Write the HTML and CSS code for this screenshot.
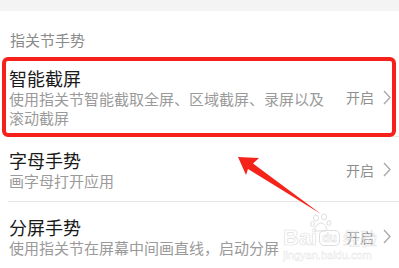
FILE: index.html
```html
<!DOCTYPE html>
<html lang="zh">
<head>
<meta charset="utf-8">
<link rel="stylesheet" href="styles.css">
</head>
<body>
<div class="page">
  <div class="band"></div>
  <div class="section-title">指关节手势</div>
  <div class="row row-first">
    <div class="text">
      <div class="title">智能截屏</div>
      <div class="desc">使用指关节智能截取全屏、区域截屏、录屏以及滚动截屏</div>
    </div>
    <div class="action">
      <span class="state">开启</span>
      <svg class="chev" width="8" height="15" viewBox="0 0 8 15"><polyline points="1,1 7,7.5 1,14" fill="none" stroke="#a8a8a8" stroke-width="1.3"/></svg>
    </div>
    <div class="highlight"></div>
  </div>
  <div class="row">
    <div class="text">
      <div class="title">字母手势</div>
      <div class="desc">画字母打开应用</div>
    </div>
    <div class="action">
      <span class="state">开启</span>
      <svg class="chev" width="8" height="15" viewBox="0 0 8 15"><polyline points="1,1 7,7.5 1,14" fill="none" stroke="#a8a8a8" stroke-width="1.3"/></svg>
    </div>
  </div>
  <div class="row row-last">
    <div class="text">
      <div class="title">分屏手势</div>
      <div class="desc">使用指关节在屏幕中间画直线，启动分屏</div>
    </div>
    <div class="action">
      <span class="state">开启</span>
      <svg class="chev" width="8" height="15" viewBox="0 0 8 15"><polyline points="1,1 7,7.5 1,14" fill="none" stroke="#a8a8a8" stroke-width="1.3"/></svg>
    </div>
  </div>
  <svg class="arrow" width="399" height="268" viewBox="0 0 399 268">
    <polygon points="238,157 259,158 253,163.5 321,214 248,169 246,175" fill="#f5241b"/>
  </svg>
  <div class="watermark">
    <svg class="paw" width="22" height="20" viewBox="0 0 22 20">
      <g fill="none" stroke="#d8d8d8" stroke-width="1">
        <ellipse cx="6" cy="5" rx="2.5" ry="3"/>
        <ellipse cx="14" cy="4" rx="2.5" ry="3"/>
        <ellipse cx="2.5" cy="11" rx="2" ry="2.5"/>
        <ellipse cx="19" cy="10" rx="2" ry="2.5"/>
        <path d="M5 18 C4 13 9 10 11 10 C14 10 18 14 16 18 Z"/>
      </g>
    </svg>
    <div class="wm-line">
      <span class="wm-bai">Bai</span><span class="wm-du">du</span><span class="wm-cn">经验</span>
    </div>
    <div class="wm-url">jingyan.baidu.com</div>
  </div>
</div>
</body>
</html>
```

FILE: styles.css
```css
* { box-sizing: border-box; }
html, body { margin: 0; padding: 0; background: #fff; }
body {
  font-family: "Noto Sans CJK SC", "Noto Sans", sans-serif;
}
.page {
  position: relative;
  width: 399px;
  height: 268px;
  overflow: hidden;
  background: #fff;
}
.band {
  height: 11px;
  background: #f4f4f4;
}
.section-title {
  height: 46px;
  padding: 19px 0 7px 10px;
  font-size: 15px;
  line-height: 20px;
  color: #8a8a8a;
}
.row {
  position: relative;
  display: flex;
  align-items: center;
  margin-left: 8px;
  padding: 12px 8px 11px 1px;
  border-bottom: 1px solid #e6e6e6;
}
.row-first {
  padding-top: 10px;
  padding-bottom: 9px;
}
.row-last {
  padding-top: 14px;
  border-bottom: none;
}
.text {
  flex: 1;
  min-width: 0;
  padding-right: 8px;
}
.title {
  font-size: 18px;
  line-height: 22px;
  color: #1a1a1a;
}
.desc {
  font-size: 15px;
  line-height: 19px;
  color: #9a9a9a;
}
.action {
  display: flex;
  align-items: center;
  gap: 9px;
  flex: none;
}
.state {
  font-size: 14px;
  line-height: 18px;
  color: #8f8f8f;
}
.chev { display: block; }
.highlight {
  position: absolute;
  left: -6px;
  top: 0;
  right: 3px;
  bottom: -1px;
  border: 4px solid #f5211a;
  border-radius: 6px;
  pointer-events: none;
}
.arrow {
  position: absolute;
  left: 0;
  top: 0;
}
.watermark {
  position: absolute;
  left: 283px;
  top: 213px;
  width: 100px;
  color: rgba(255, 255, 255, 0.4);
  opacity: 0.8;
}
.paw {
  display: block;
  margin-left: 27px;
}
.wm-line {
  display: flex;
  align-items: center;
  height: 18px;
  margin-top: -4px;
}
.wm-bai {
  font-family: "Liberation Sans", sans-serif;
  font-weight: bold;
  font-size: 22px;
  line-height: 18px;
  color: rgba(255,255,255,0.5);
  -webkit-text-stroke: 0.6px #d6d6d6;
}
.wm-du {
  font-family: "Liberation Sans", sans-serif;
  font-weight: bold;
  font-size: 12px;
  line-height: 14px;
  padding: 0 2px;
  margin-left: 2px;
  border: 1px solid #d6d6d6;
  border-radius: 5px;
  color: rgba(255,255,255,0.5);
  -webkit-text-stroke: 0.5px #d0d0d0;
}
.wm-cn {
  font-size: 17px;
  line-height: 18px;
  margin-left: 3px;
  color: rgba(255,255,255,0.3);
  -webkit-text-stroke: 0.5px #dadada;
}
.wm-url {
  font-family: "Liberation Sans", sans-serif;
  font-size: 11px;
  line-height: 12px;
  margin-top: 2px;
  color: rgba(255,255,255,0.4);
  -webkit-text-stroke: 0.4px #e0e0e0;
}
```
